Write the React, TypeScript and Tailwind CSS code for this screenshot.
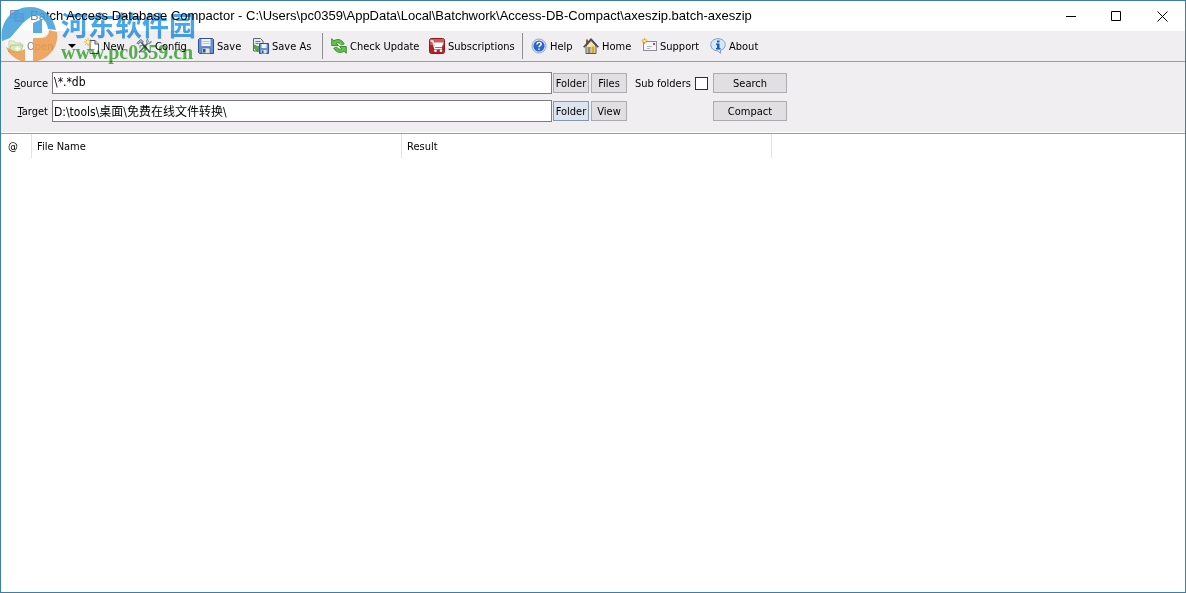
import React from "react";

const ICON = "h-4 w-4 shrink-0";

function AppIcon() {
  return (
    <svg viewBox="0 0 16 16" className={ICON}>
      <rect x="1" y="2" width="9" height="9" rx="1" fill="#7f8fc0" />
      <rect x="5" y="5" width="10" height="9" rx="1" fill="#8b4a6b" />
      <path d="M6.500 8h7M6.500 11h7M10 6v7" stroke="#e6d5e2" />
      <path d="M2 4h5M2 7h3" stroke="#e5ebf7" />
    </svg>
  );
}

function OpenIcon() {
  return (
    <svg viewBox="0 0 16 16" className={ICON}>
      <path d="M1 14V3h5l1 2h6v3" fill="#d9e08c" stroke="#93a24b" />
      <path d="M1 14l2-7h12l-2 7z" fill="#a5d36b" stroke="#5f9432" />
      <path d="M7 10.500h5M9.500 8v5" stroke="#f2fae4" strokeWidth="1.500" />
    </svg>
  );
}

function NewIcon() {
  return (
    <svg viewBox="0 0 16 16" className={ICON}>
      <path d="M6 2.500h5l3.500 3.500v9.500H6z" fill="#fff" stroke="#4e5966" />
      <path d="M11 2.500v3.500h3.500" fill="#d7dde5" stroke="#4e5966" />
      <path d="M4 0v8M0 4h8M1.200 1.200l5.600 5.600M6.800 1.200L1.200 6.800" stroke="#e5b52b" />
      <circle cx="4" cy="4" r="1.500" fill="#fff3a3" />
    </svg>
  );
}

function ConfigIcon() {
  return (
    <svg viewBox="0 0 16 16" className={ICON}>
      <path d="M5 4l9 10.500" stroke="#4a5a78" strokeWidth="1.800" />
      <path d="M11.500 5.500L3 14.500" stroke="#5a6674" strokeWidth="1.800" />
      <path d="M.8 5l4-3.700 2.700 2.500L6 5 4.500 4.200 2 6.300z" fill="#9fb1c8" stroke="#56677c" strokeWidth=".8" />
      <path d="M11.500 1c-1.500 1.500-1.200 3.800.5 4.700 1.500.5 3-.6 3.300-2.200l-1.800.8-1.200-1.100z" fill="#c8d0d8" stroke="#63707e" strokeWidth=".8" />
    </svg>
  );
}

function SaveIcon() {
  return (
    <svg viewBox="0 0 16 16" className={ICON}>
      <path d="M.5 1.500l1-1h13l1 1v14h-14l-1-1z" fill="#6a90d4" stroke="#2f4f9c" />
      <rect x="3.500" y="1" width="9" height="7" fill="#f0f5fc" />
      <path d="M4.500 3.500h7M4.500 5.500h7" stroke="#b4c3da" />
      <rect x="4" y="10" width="8" height="5.500" fill="#dfe5ee" stroke="#3d568e" strokeWidth=".6" />
      <rect x="5" y="11" width="2.500" height="3.500" fill="#34517f" />
    </svg>
  );
}

function SaveAsIcon() {
  return (
    <svg viewBox="0 0 16 16" className={ICON}>
      <path d="M.5.500h7l2.500 2.500v10H.5z" fill="#e6e9ee" stroke="#5c6671" />
      <path d="M2.500 3.500h5M2.500 5.500h3" stroke="#6c7885" />
      <path d="M1.500 7v3.500L5 14v-2.500h2V8.500H4z" fill="#4fae3c" stroke="#2c7d25" strokeWidth=".6" />
      <path d="M6.500 5.500h9v10h-9z" fill="#6a90d4" stroke="#2f4f9c" />
      <rect x="8.500" y="6" width="5" height="4" fill="#f0f5fc" />
      <rect x="8.500" y="12" width="5" height="3.500" fill="#dfe5ee" />
      <rect x="9" y="12.500" width="1.500" height="2.500" fill="#34517f" />
    </svg>
  );
}

function UpdateIcon() {
  return (
    <svg viewBox="0 0 16 16" className={ICON}>
      <path d="M.7.700L3 2.800C6 .600 10.500 1 13.200 5.800L10.500 7C9 4.800 7 4.200 5.200 5.200L7.500 7.500H.7z" fill="#62c445" stroke="#23801c" strokeWidth=".8" />
      <path d="M15.300 15.300L13 13.200C10 15.400 5.500 15 2.800 10.200L5.500 9c1.500 2.200 3.500 2.800 5.300 1.800L8.500 8.500h6.800z" fill="#62c445" stroke="#23801c" strokeWidth=".8" />
    </svg>
  );
}

function CartIcon() {
  return (
    <svg viewBox="0 0 16 16" className={ICON}>
      <rect x=".5" y=".5" width="15" height="15" rx="2" fill="#b3232a" stroke="#8f191f" />
      <path d="M1 1h14v6H1z" fill="#e08a8d" opacity=".55" />
      <path d="M1.500 3h2.300l2 7.500H13" fill="none" stroke="#fff" strokeWidth="1.300" />
      <path d="M5 4.500h9.500L13 9H6z" fill="#fff" />
      <circle cx="6.500" cy="12.700" r="1.300" fill="#fff" />
      <circle cx="12" cy="12.700" r="1.300" fill="#fff" />
    </svg>
  );
}

function HelpIcon() {
  return (
    <svg viewBox="0 0 16 16" className={ICON}>
      <circle cx="8" cy="8" r="7" fill="#dce9fb" stroke="#8fa6cf" />
      <circle cx="8" cy="8" r="5.600" fill="#2d66c8" />
      <path d="M6 6.500c0-3 4.200-2.600 4.200-.3C10.200 7.600 8 7.600 8 9.300M8 10.500v1.500" fill="none" stroke="#fff" strokeWidth="1.400" />
    </svg>
  );
}

function HomeIcon() {
  return (
    <svg viewBox="0 0 16 16" className={ICON}>
      <path d="M3 1.500h2v4H3z" fill="#8e5a34" />
      <path d="M3 8l5-5.500L13 8v7.500H3z" fill="#f5e6ad" stroke="#59565c" />
      <path d="M.7 9.300L8 1.300l7.300 8" fill="none" stroke="#484750" strokeWidth="1.600" />
      <rect x="4.500" y="9" width="3" height="6" fill="#8f8a80" />
      <rect x="8.500" y="8.500" width="3" height="6.500" fill="#d8a53a" />
    </svg>
  );
}

function SupportIcon() {
  return (
    <svg viewBox="0 0 16 16" className={ICON}>
      <rect x="2.500" y="3.500" width="13" height="9" fill="#f6f6f8" stroke="#8d8d99" />
      <rect x="12" y="5" width="2" height="2" fill="#c9454c" />
      <path d="M6 8.500h5M6 10.500h3" stroke="#b4b4c0" />
      <path d="M3.500 0v6M.5 3h6M1.500 1l4 4M5.500 1l-4 4" stroke="#e39b31" />
      <circle cx="3.500" cy="3" r="1.200" fill="#fff0a0" />
    </svg>
  );
}

function AboutIcon() {
  return (
    <svg viewBox="0 0 16 16" className={ICON}>
      <path d="M8 .700c4.200 0 7.200 2.600 7.200 6 0 3-2.200 5-4.700 5.600V15.300L7.500 12.700C3.500 12.700.8 10.200.8 6.700s3-6 7.200-6z" fill="#d4e8f8" stroke="#7b9fbe" />
      <path d="M7 2.500h2.500v2H7zM6 5.500h3.500V10h1v1.500H6V10h1V7H6z" fill="#185cad" />
    </svg>
  );
}

function Tool({ icon, label, width }: { icon: React.ReactNode; label: string; width: string }) {
  return (
    <button type="button" className={`flex shrink-0 items-center gap-[3px] whitespace-nowrap ${width}`}>
      {icon}
      <span className="pt-px">{label}</span>
    </button>
  );
}

function Divider() {
  return <div className="mr-2 h-[26px] w-px shrink-0 bg-[#8f8d92]" />;
}

function PushButton({ label, wide, hot }: { label: string; wide?: boolean; hot?: boolean }) {
  return (
    <button
      type="button"
      className={`flex h-5 shrink-0 items-center justify-center border pt-px ${wide ? "w-[74px]" : "w-9"} ${
        hot ? "border-[#8399b0] bg-[#dbe4ef]" : "border-[#adabaf] bg-[#e1dfe2]"
      }`}
    >
      {label}
    </button>
  );
}

const FIELD =
  "h-[22px] w-[500px] shrink-0 border border-[#7d7b80] bg-white px-px pb-[2px] outline-none text-[12px]";

function Watermark() {
  return (
    <div className="pointer-events-none absolute left-0 top-0 flex">
      <svg viewBox="0 0 60 64" className="h-16 w-[60px] shrink-0">
        <circle cx="28" cy="33" r="26" fill="#fff" opacity=".5" />
        <g opacity=".85">
          <path d="M1 40C-2 21 11 6 29 6c13 0 23 8 26 23l-8-1c-1-8-7-14-15-14L22 22 9 37z" fill="#3d9ddb" />
          <path d="M32 22l9-4v14h-9z" fill="#3d9ddb" />
          <path d="M56 31c2 15-8 28-24 30V37h9c5-1 7-4 7-8z" fill="#ee9a4d" />
          <path d="M5 46l6 3c4 2 8 2 13-1v13C15 59 8 54 5 46z" fill="#ee9a4d" />
        </g>
      </svg>
      <div className="flex flex-col pt-2 mix-blend-multiply">
        <span className="font-['Noto_Sans_CJK_SC',sans-serif] text-[27px] leading-[32px] font-bold text-[#4aa5ea]">河东软件园</span>
        <span className="font-['Liberation_Serif',serif] text-[20px] leading-[22px] font-bold text-[#5cb955]">www.pc0359.cn</span>
      </div>
    </div>
  );
}

const TITLE =
  "Batch Access Database Compactor - C:\\Users\\pc0359\\AppData\\Local\\Batchwork\\Access-DB-Compact\\axeszip.batch-axeszip";

export default function App() {
  return (
    <div className="relative flex min-h-screen flex-col overflow-hidden border border-[#3b7ea8] bg-[#f0eef1] font-['DejaVu_Sans_Condensed','Noto_Sans_CJK_SC',sans-serif] text-[11px] leading-4 text-black">
      <header className="flex h-[30px] shrink-0 items-center bg-white pl-2">
        <AppIcon />
        <h1 className="ml-[5px] flex-1 whitespace-nowrap font-['Liberation_Sans',sans-serif] text-[13px]">{TITLE}</h1>
        <button type="button" aria-label="Minimize" className="flex h-full w-[46px] items-center justify-center">
          <svg viewBox="0 0 11 11" className="h-[11px] w-[11px]"><path d="M0 5.500h10" stroke="#000" /></svg>
        </button>
        <button type="button" aria-label="Maximize" className="flex h-full w-[45px] items-center justify-center">
          <svg viewBox="0 0 11 11" className="h-[11px] w-[11px]"><path d="M.5.500h9v9h-9z" fill="none" stroke="#000" /></svg>
        </button>
        <button type="button" aria-label="Close" className="flex h-full w-[46px] items-center justify-center">
          <svg viewBox="0 0 11 11" className="h-[11px] w-[11px]"><path d="M.5.500l10 10M10.500.500l-10 10" stroke="#000" /></svg>
        </button>
      </header>

      <nav className="flex h-[31px] shrink-0 items-center border-b border-[#9c9a9f] pl-[7px]">
        <Tool icon={<OpenIcon />} label="Open" width="w-[60px]" />
        <button type="button" aria-label="Recent files" className="flex w-4 shrink-0">
          <svg viewBox="0 0 8 4" className="h-1 w-2"><path d="M0 0h8L4 4z" fill="#000" /></svg>
        </button>
        <Tool icon={<NewIcon />} label="New" width="w-[52px]" />
        <Tool icon={<ConfigIcon />} label="Config" width="w-[62px]" />
        <Tool icon={<SaveIcon />} label="Save" width="w-[55px]" />
        <Tool icon={<SaveAsIcon />} label="Save As" width="w-[69px]" />
        <Divider />
        <Tool icon={<UpdateIcon />} label="Check Update" width="w-[98px]" />
        <Tool icon={<CartIcon />} label="Subscriptions" width="w-[93px]" />
        <Divider />
        <Tool icon={<HelpIcon />} label="Help" width="w-[52px]" />
        <Tool icon={<HomeIcon />} label="Home" width="w-[58px]" />
        <Tool icon={<SupportIcon />} label="Support" width="w-[69px]" />
        <Tool icon={<AboutIcon />} label="About" width="w-[60px]" />
      </nav>

      <form className="flex h-[71px] shrink-0 flex-col gap-[6px] border-b border-white pt-[10px]">
        <div className="flex items-center">
          <label htmlFor="source" className="w-[51px] shrink-0 pr-1 pt-px text-right"><u>S</u>ource</label>
          <input id="source" className={FIELD} defaultValue="\*.*db" />
          <div className="ml-px flex gap-[2px]">
            <PushButton label="Folder" />
            <PushButton label="Files" />
          </div>
          <label htmlFor="sub" className="w-[68px] shrink-0 pl-2 pt-px whitespace-nowrap">Sub folders</label>
          <input id="sub" type="checkbox" className="mr-[5px] h-[13px] w-[13px] shrink-0 appearance-none border border-[#2f2d32] bg-white" />
          <PushButton label="Search" wide />
        </div>
        <div className="flex items-center">
          <label htmlFor="target" className="w-[51px] shrink-0 pr-1 pt-px text-right"><u>T</u>arget</label>
          <input id="target" className={FIELD} defaultValue="D:\tools\桌面\免费在线文件转换\" />
          <div className="mr-[86px] ml-px flex gap-[2px]">
            <PushButton label="Folder" hot />
            <PushButton label="View" />
          </div>
          <PushButton label="Compact" wide />
        </div>
      </form>

      <main className="flex-1 border-t border-[#9c9a9f] bg-white">
        <table className="table-fixed border-separate border-spacing-0 text-left">
          <thead>
            <tr className="h-6">
              <th className="w-[31px] border-r border-[#e3e1e4] p-0 pt-px pl-[7px] font-normal">@</th>
              <th className="w-[370px] border-r border-[#e3e1e4] p-0 pt-px pl-[5px] font-normal">File Name</th>
              <th className="w-[370px] border-r border-[#e3e1e4] p-0 pt-px pl-[5px] font-normal">Result</th>
            </tr>
          </thead>
        </table>
      </main>
      <Watermark />
    </div>
  );
}
